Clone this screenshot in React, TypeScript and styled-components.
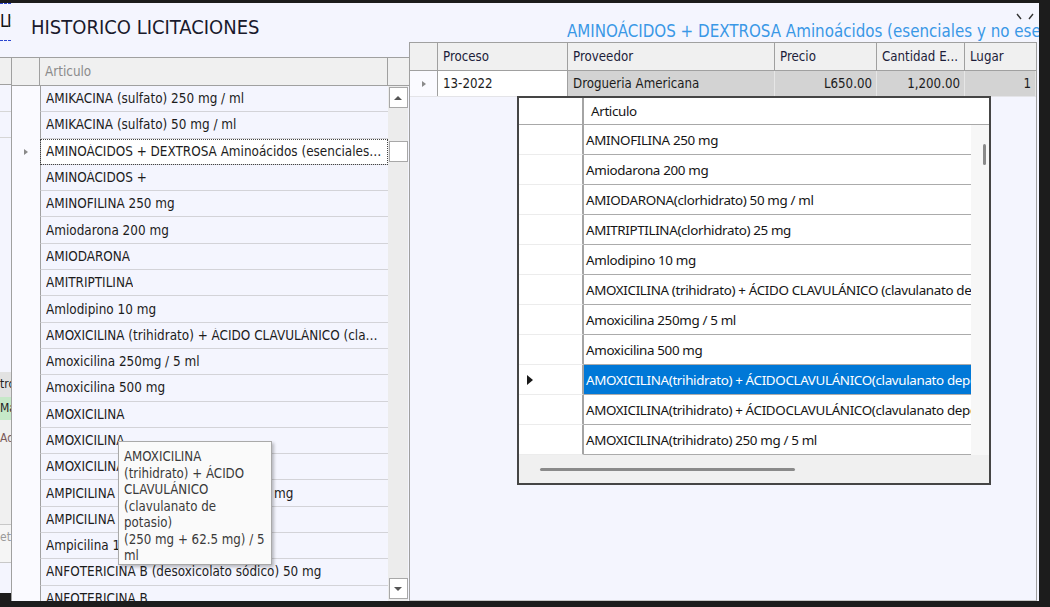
import React from 'react';
import styled, { createGlobalStyle } from 'styled-components';

const LAV = '#f4f5fe';
const TAHOMA = `"DejaVu Sans Condensed", "DejaVu Sans", sans-serif`;
const SEGOE = `"Noto Sans", "Open Sans", sans-serif`;

const GlobalStyle = createGlobalStyle`
  html, body {
    margin: 0;
    padding: 0;
    background: #1c1c1c;
  }
  #root {
    width: 1050px;
    height: 607px;
    overflow: hidden;
  }
`;

const Screen = styled.div`
  width: 1050px;
  height: 607px;
  box-sizing: border-box;
  padding-top: 3px;
  background: #1c1c1c;
  overflow: hidden;
`;

const Desk = styled.div`
  display: flex;
  width: 1039px;
  height: 598px;
`;

/* window behind the dialog, only a thin slice shows */
const BackStrip = styled.div`
  width: 11px;
  height: 590px;
  flex-shrink: 0;
  display: flex;
  flex-direction: column;
  background: ${LAV};
  overflow: hidden;
  font-family: ${TAHOMA};
`;

const BackTab = styled.div`
  height: 38px;
  box-sizing: border-box;
  border-top: 1px dashed #2a45d0;
  border-bottom: 1px dashed #2a45d0;
  font-size: 17px;
  letter-spacing: -1.5px;
  line-height: 34px;
  color: #111;
  white-space: nowrap;
`;

const BackRow = styled.div<{ $h: number; $bg?: string; $line?: string; $color?: string }>`
  height: ${(p) => p.$h}px;
  flex-shrink: 0;
  box-sizing: border-box;
  background: ${(p) => p.$bg || 'transparent'};
  border-bottom: ${(p) => (p.$line ? `1px solid ${p.$line}` : 'none')};
  color: ${(p) => p.$color || '#222'};
  font-size: 12px;
  line-height: ${(p) => Math.min(p.$h, 24)}px;
  white-space: nowrap;
`;

const Dialog = styled.div`
  flex: 1;
  display: flex;
  background: ${LAV};
  min-width: 0;
`;

const LeftPane = styled.div`
  width: 398px;
  flex-shrink: 0;
  display: flex;
  flex-direction: column;
`;

const Title = styled.div`
  height: 54px;
  box-sizing: border-box;
  padding: 13px 0 0 20px;
  font-family: ${TAHOMA};
  font-size: 20px;
  line-height: 22px;
  color: #1a1a2c;
`;

const LeftGrid = styled.div`
  flex: 1;
  min-height: 0;
  display: flex;
  flex-direction: column;
  position: relative;
  border-left: 1px solid #a0a0a0;
  font-family: ${TAHOMA};
  font-size: 13.4px;
`;

const HeaderRow = styled.div<{ $h: number }>`
  display: flex;
  height: ${(p) => p.$h}px;
  flex-shrink: 0;
  box-sizing: border-box;
  background: #f0f0f0;
  border-top: 1px solid #a0a0a0;
  border-bottom: 1px solid #a0a0a0;
`;

const HeadCell = styled.div<{ $w?: number; $muted?: boolean; $last?: boolean }>`
  ${(p) => (p.$w ? `width: ${p.$w}px; flex-shrink: 0;` : 'flex: 1;')}
  box-sizing: border-box;
  border-right: ${(p) => (p.$last ? 'none' : '1px solid #a0a0a0')};
  padding-left: 5px;
  display: flex;
  align-items: center;
  color: ${(p) => (p.$muted ? '#8b8b8b' : '#1d1d3a')};
  white-space: nowrap;
  overflow: hidden;
`;

const LeftBody = styled.div`
  flex: 1;
  min-height: 0;
  display: flex;
`;

const RowsArea = styled.div`
  width: 376px;
  overflow: hidden;
`;

const GridRow = styled.div`
  display: flex;
  height: 26.3px;
`;

const RowHead = styled.div<{ $w: number }>`
  width: ${(p) => p.$w}px;
  flex-shrink: 0;
  display: flex;
  align-items: center;
  justify-content: center;
  background: #fafaff;
`;

const Marker = styled.span<{ $dark?: boolean; $big?: boolean }>`
  width: 0;
  height: 0;
  border-top: ${(p) => (p.$big ? 5 : 3.5)}px solid transparent;
  border-bottom: ${(p) => (p.$big ? 5 : 3.5)}px solid transparent;
  border-left: ${(p) => (p.$big ? 6 : 4)}px solid ${(p) => (p.$dark ? '#1a1a1a' : '#8a8a8a')};
`;

const ArticleCell = styled.div<{ $focused?: boolean }>`
  flex: 1;
  min-width: 0;
  box-sizing: border-box;
  border-left: 1px solid #a0a0a0;
  border-bottom: 1px solid #d3d3d8;
  padding: 0 5px;
  display: flex;
  align-items: center;
  background: ${(p) => (p.$focused ? '#ffffff' : LAV)};
  outline: ${(p) => (p.$focused ? '1px dotted #444' : 'none')};
  outline-offset: -1px;
  color: #1c1c1c;
  span {
    white-space: nowrap;
    overflow: hidden;
    text-overflow: ellipsis;
  }
`;

const VScroll = styled.div`
  width: 20px;
  flex-shrink: 0;
  display: flex;
  flex-direction: column;
  align-items: center;
  background: #ececec;
  padding: 1px 0 2px;
  box-sizing: border-box;
`;

const ScrollBtn = styled.div`
  width: 19px;
  height: 21px;
  box-sizing: border-box;
  background: #fff;
  border: 1px solid #a8a8a8;
  display: flex;
  align-items: center;
  justify-content: center;
`;

const Arrow = styled.span<{ $down?: boolean }>`
  width: 0;
  height: 0;
  border-left: 4px solid transparent;
  border-right: 4px solid transparent;
  ${(p) => (p.$down ? 'border-top' : 'border-bottom')}: 4px solid #555;
`;

const Thumb = styled.div`
  width: 19px;
  height: 21px;
  box-sizing: border-box;
  background: #fff;
  border: 1px solid #a8a8a8;
`;

const Spacer = styled.div`
  flex: 1;
`;

const Tooltip = styled.div`
  position: absolute;
  left: 106px;
  top: 384px;
  width: 154px;
  height: 124px;
  box-sizing: border-box;
  padding: 7px 5px 0 5px;
  background: #fafafa;
  border: 1px solid #a9a9a9;
  box-shadow: 2px 2px 3px rgba(0, 0, 0, 0.25);
  font-family: ${TAHOMA};
  font-size: 13.2px;
  line-height: 16.5px;
  color: #3a3a3a;
  white-space: pre;
  overflow: hidden;
`;

const RightPane = styled.div`
  flex: 1;
  min-width: 0;
  display: flex;
  flex-direction: column;
`;

const SubTitle = styled.div`
  height: 39px;
  flex-shrink: 0;
  box-sizing: border-box;
  position: relative;
  display: flex;
  align-items: flex-end;
  padding: 0 0 1px 158px;
  font-family: ${TAHOMA};
  font-size: 16.8px;
  line-height: 20px;
  color: #3a98e6;
  white-space: nowrap;
  overflow: hidden;
`;

const CloseMark = styled.svg`
  position: absolute;
  right: 5px;
  top: 10px;
`;

const RightGrid = styled.div`
  flex: 1;
  min-height: 0;
  margin-right: 2px;
  position: relative;
  background: ${LAV};
  border: 1px solid #a0a0a0;
  border-top: none;
  border-bottom-color: #c8c8c8;
  font-family: ${TAHOMA};
  font-size: 13.2px;
`;

const DataRow = styled.div`
  display: flex;
  height: 26px;
  box-sizing: border-box;
  border-bottom: 1px solid #e4e4e8;
`;

const DataCell = styled.div<{ $w?: number; $shaded?: boolean; $right?: boolean }>`
  ${(p) => (p.$w ? `width: ${p.$w}px; flex-shrink: 0;` : 'flex: 1;')}
  box-sizing: border-box;
  display: flex;
  align-items: center;
  justify-content: ${(p) => (p.$right ? 'flex-end' : 'flex-start')};
  padding: 0 4px 0 5px;
  background: ${(p) => (p.$shaded ? '#d3d3d3' : '#ffffff')};
  border-right: 1px solid ${(p) => (p.$shaded ? '#e6e6e6' : '#a0a0a0')};
  color: #1c1c1c;
  white-space: nowrap;
  overflow: hidden;
`;

const RowHeadCell = styled(RowHead)`
  box-sizing: border-box;
  border-right: 1px solid #a0a0a0;
`;

/* drop-down list opened over the right grid */
const Popup = styled.div`
  position: absolute;
  left: 107px;
  top: 54px;
  width: 474px;
  height: 389px;
  box-sizing: border-box;
  border: 2px solid #454545;
  background: #fff;
  display: flex;
  flex-direction: column;
  font-family: ${SEGOE};
  font-size: 13.4px;
  letter-spacing: -0.35px;
  color: #151515;
`;

const PopHeader = styled.div`
  display: flex;
  height: 27px;
  flex-shrink: 0;
  box-sizing: border-box;
  border-bottom: 1px solid #a8a8a8;
`;

const PopIndex = styled.div<{ $line?: boolean }>`
  width: 65px;
  flex-shrink: 0;
  box-sizing: border-box;
  border-right: 2px solid #a4a4a4;
  border-bottom: ${(p) => (p.$line ? '1px solid #ececec' : 'none')};
  display: flex;
  align-items: center;
  padding-left: 8px;
`;

const PopHeadText = styled.div`
  padding-left: 7px;
  display: flex;
  align-items: center;
`;

const PopBody = styled.div`
  display: flex;
  flex: 1;
  min-height: 0;
`;

const PopRows = styled.div`
  width: 452px;
  overflow: hidden;
`;

const PopRow = styled.div`
  display: flex;
  height: 30px;
`;

const PopCell = styled.div<{ $selected?: boolean }>`
  flex: 1;
  min-width: 0;
  box-sizing: border-box;
  border-bottom: 1px solid #ababab;
  padding-left: 2px;
  display: flex;
  align-items: center;
  white-space: nowrap;
  overflow: hidden;
  background: ${(p) => (p.$selected ? '#0078d7' : '#fff')};
  color: ${(p) => (p.$selected ? '#fff' : '#151515')};
`;

const PopVScroll = styled.div`
  width: 18px;
  flex-shrink: 0;
  background: #f7f7f7;
  padding: 19px 0 0 12px;
  box-sizing: border-box;
`;

const PopVThumb = styled.div`
  width: 3px;
  height: 21px;
  border-radius: 2px;
  background: #8a8a8a;
`;

const PopHScroll = styled.div`
  height: 28px;
  flex-shrink: 0;
  background: #f0f0f0;
  display: flex;
  align-items: center;
  padding: 0 0 0 21px;
`;

const PopHThumb = styled.div`
  width: 255px;
  height: 3px;
  border-radius: 2px;
  background: #8a8a8a;
`;

const leftRows = [
  'AMIKACINA (sulfato) 250 mg / ml',
  'AMIKACINA (sulfato) 50 mg / ml',
  'AMINOÁCIDOS + DEXTROSA Aminoácidos (esenciales y no esenciales) 5.4 % + Dextrosa 50 %',
  'AMINOÁCIDOS +',
  'AMINOFILINA 250 mg',
  'Amiodarona 200 mg',
  'AMIODARONA',
  'AMITRIPTILINA',
  'Amlodipino 10 mg',
  'AMOXICILINA (trihidrato) + ÁCIDO CLAVULÁNICO (clavulanato de potasio) (250 mg + 62.5 mg) / 5 ml',
  'Amoxicilina 250mg / 5 ml',
  'Amoxicilina 500 mg',
  'AMOXICILINA',
  'AMOXICILINA',
  'AMOXICILINA 500 mg',
  'AMPICILINA (sódica) SULBACTAM 500 mg',
  'AMPICILINA (sódica) 1 g',
  'Ampicilina 1 g',
  'ANFOTERICINA B (desoxicolato sódico) 50 mg',
  'ANFOTERICINA B',
];

const popupRows = [
  'AMINOFILINA 250 mg',
  'Amiodarona 200 mg',
  'AMIODARONA(clorhidrato) 50 mg / ml',
  'AMITRIPTILINA(clorhidrato) 25 mg',
  'Amlodipino 10 mg',
  'AMOXICILINA (trihidrato) + ÁCIDO CLAVULÁNICO (clavulanato de potasio) (250 mg + 62.5 mg) / 5 ml',
  'Amoxicilina 250mg / 5 ml',
  'Amoxicilina 500 mg',
  'AMOXICILINA(trihidrato) + ÁCIDOCLAVULÁNICO(clavulanato depotasio) 500 mg + 125 mg',
  'AMOXICILINA(trihidrato) + ÁCIDOCLAVULÁNICO(clavulanato depotasio) 875 mg + 125 mg',
  'AMOXICILINA(trihidrato) 250 mg / 5 ml',
  'AMOXICILINA(trihidrato) 500 mg',
];

const FOCUSED_ROW = 2;
const POPUP_SELECTED = 8;
const THUMB_OFFSET = 33;

const tooltipText = [
  'AMOXICILINA',
  '(trihidrato) + ÁCIDO',
  'CLAVULÁNICO',
  '(clavulanato de',
  'potasio)',
  '(250 mg + 62.5 mg) / 5',
  'ml',
].join('\n');

const columns = [
  { title: 'Proceso', width: 130 },
  { title: 'Proveedor', width: 207 },
  { title: 'Precio', width: 102 },
  { title: 'Cantidad E...', width: 88 },
  { title: 'Lugar' },
];

const App = () => {
  return (
    <Screen>
      <GlobalStyle />
      <Desk>
        <BackStrip>
          <BackTab>LIS</BackTab>
          <BackRow $h={16} />
          <BackRow $h={28} $bg="#f0f0f0" $line="#a0a0a0" style={{ borderTop: '1px solid #a0a0a0' }} />
          <BackRow $h={27} $line="#d6d6d6" />
          <BackRow $h={26} $line="#d6d6d6" />
          <BackRow $h={234} />
          <BackRow $h={25} $bg="#e2e2e2">tro</BackRow>
          <BackRow $h={23} $bg="#c6e8c8">Ma</BackRow>
          <BackRow $h={105} $bg="#f0f0f0" $line="#c8c8c8" $color="#7a5a5a" style={{ paddingTop: 6 }}>
            Ad
          </BackRow>
          <BackRow $h={38} $bg="#f5f5f5" $line="#c8c8c8" $color="#9a9a9a">
            etr
          </BackRow>
        </BackStrip>

        <Dialog>
          <LeftPane>
            <Title>HISTORICO LICITACIONES</Title>
            <LeftGrid>
              <HeaderRow $h={29}>
                <HeadCell $w={28} />
                <HeadCell $w={348} $muted>
                  Articulo
                </HeadCell>
                <HeadCell $last />
              </HeaderRow>
              <LeftBody>
                <RowsArea>
                  {leftRows.map((name, i) => (
                    <GridRow key={name + i}>
                      <RowHead $w={28}>{i === FOCUSED_ROW && <Marker />}</RowHead>
                      <ArticleCell $focused={i === FOCUSED_ROW}>
                        <span>{name}</span>
                      </ArticleCell>
                    </GridRow>
                  ))}
                </RowsArea>
                <VScroll>
                  <ScrollBtn>
                    <Arrow />
                  </ScrollBtn>
                  <Thumb style={{ marginTop: THUMB_OFFSET }} />
                  <Spacer />
                  <ScrollBtn>
                    <Arrow $down />
                  </ScrollBtn>
                </VScroll>
              </LeftBody>
              <Tooltip>{tooltipText}</Tooltip>
            </LeftGrid>
          </LeftPane>

          <RightPane>
            <SubTitle>
              AMINOÁCIDOS + DEXTROSA Aminoácidos (esenciales y no esenciales) 5.4 % + Dextrosa 50 %
              <CloseMark width="18" height="8" viewBox="0 0 18 8">
                <path d="M1 1 L5 6 M17 1 L13 6" stroke="#333" strokeWidth="1.4" fill="none" />
              </CloseMark>
            </SubTitle>
            <RightGrid>
              <HeaderRow $h={29}>
                <HeadCell $w={28} />
                {columns.map((c, i) => (
                  <HeadCell key={c.title} $w={c.width} $last={i === columns.length - 1}>
                    {c.title}
                  </HeadCell>
                ))}
              </HeaderRow>
              <DataRow>
                <RowHeadCell $w={28}>
                  <Marker />
                </RowHeadCell>
                <DataCell $w={130}>13-2022</DataCell>
                <DataCell $w={207} $shaded>
                  Drogueria Americana
                </DataCell>
                <DataCell $w={102} $shaded $right>
                  L650.00
                </DataCell>
                <DataCell $w={88} $shaded $right>
                  1,200.00
                </DataCell>
                <DataCell $shaded $right>
                  1
                </DataCell>
              </DataRow>

              <Popup>
                <PopHeader>
                  <PopIndex />
                  <PopHeadText>Articulo</PopHeadText>
                </PopHeader>
                <PopBody>
                  <PopRows>
                    {popupRows.map((name, i) => (
                      <PopRow key={name + i}>
                        <PopIndex $line>{i === POPUP_SELECTED && <Marker $dark $big />}</PopIndex>
                        <PopCell $selected={i === POPUP_SELECTED}>{name}</PopCell>
                      </PopRow>
                    ))}
                  </PopRows>
                  <PopVScroll>
                    <PopVThumb />
                  </PopVScroll>
                </PopBody>
                <PopHScroll>
                  <PopHThumb />
                </PopHScroll>
              </Popup>
            </RightGrid>
          </RightPane>
        </Dialog>
      </Desk>
    </Screen>
  );
};

export default App;
